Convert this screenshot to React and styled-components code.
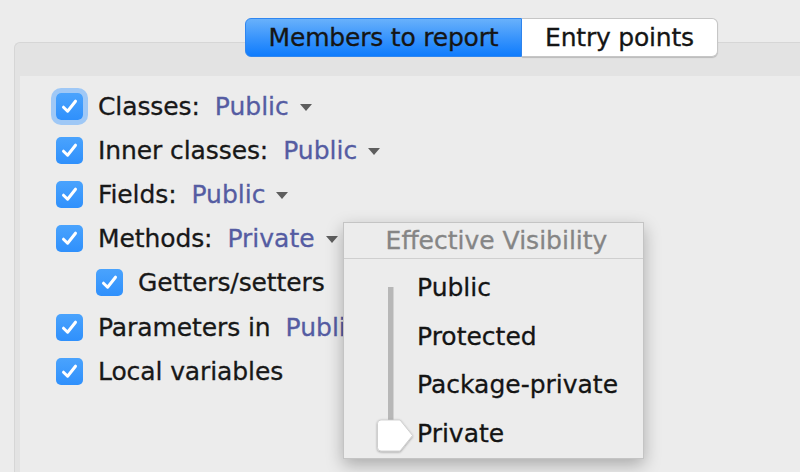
import React from "react";
import styled, { createGlobalStyle } from "styled-components";

const Global = createGlobalStyle`
  html, body { margin: 0; padding: 0; background: #ececec; }
  body {
    font-family: "DejaVu Sans", "Liberation Sans", sans-serif;
    -webkit-text-stroke: 0.3px currentColor;
  }
`;

const Screen = styled.div`
  width: 800px;
  height: 472px;
  overflow: hidden;
  background: #ececec;
  position: relative;
  padding-top: 42px;
  box-sizing: border-box;
`;

const Panel = styled.div`
  margin-left: 14px;
  width: 800px;
  height: 440px;
  box-sizing: border-box;
  border: 1px solid #d6d6d6;
  border-right: none;
  border-bottom: none;
  border-radius: 6px 0 0 0;
  background: #e3e3e3;
  display: flex;
  flex-direction: column;
`;

const Tabs = styled.div`
  display: flex;
  margin: -25px 0 0 230px;
  height: 39px;
  width: 473px;
`;

const Tab = styled.div`
  box-sizing: border-box;
  width: ${(p) => p.$w}px;
  display: flex;
  align-items: center;
  justify-content: center;
  font-size: 25px;
  color: #151515;
  letter-spacing: -0.2px;
  ${(p) =>
    p.$active
      ? `
    background: linear-gradient(#68b1fb, #3a95fc 50%, #0f7cfd);
    border: 1px solid #2f86f0;
    border-radius: 6px 0 0 6px;
  `
      : `
    background: #ffffff;
    border: 1px solid #c6c6c6;
    border-left: none;
    border-radius: 0 6px 6px 0;
    box-shadow: 0 1px 1px rgba(0,0,0,0.18);
  `}
`;

const Content = styled.div`
  margin: 19px 0 0 5px;
  flex: 1;
  background: #ececec;
  padding: 8px 0 0 36px;
  position: relative;
`;

const Row = styled.div`
  height: 44.2px;
  display: flex;
  align-items: center;
  padding-left: ${(p) => (p.$indent ? 40 : 0)}px;
  font-size: 25px;
  color: #181818;
  white-space: nowrap;
`;

const Box = styled.span`
  width: 27px;
  height: 27px;
  flex: none;
  border-radius: 5px;
  background: linear-gradient(#4aa3fd, #2f90fc);
  display: flex;
  align-items: center;
  justify-content: center;
  margin-right: 15px;
  box-shadow: ${(p) => (p.$focus ? "0 0 0 5px #9fc8f6" : "none")};
`;

const Label = styled.span`
  letter-spacing: -0.1px;
`;

const Value = styled.span`
  color: #555ca2;
  margin-left: 15px;
`;

const Caret = styled.span`
  width: 0;
  height: 0;
  border-left: 6.5px solid transparent;
  border-right: 6.5px solid transparent;
  border-top: 7px solid #5e5e5e;
  margin-left: 11px;
  margin-top: 2px;
`;

const Popup = styled.div`
  position: absolute;
  left: 323px;
  top: 146px;
  width: 301px;
  height: 237px;
  box-sizing: border-box;
  background: #ececec;
  border: 1px solid #c4c4c4;
  box-shadow: 0 6px 16px rgba(0, 0, 0, 0.28);
  display: flex;
  flex-direction: column;
`;

const PopupHeader = styled.div`
  height: 35px;
  border-bottom: 1px solid #cfcfcf;
  display: flex;
  align-items: center;
  justify-content: center;
  font-size: 25px;
  color: #858585;
  flex: none;
  padding-left: 6px;
`;

const PopupBody = styled.div`
  display: flex;
  padding-top: 4px;
`;

const SliderCol = styled.div`
  width: 73px;
  flex: none;
`;

const Items = styled.div`
  display: flex;
  flex-direction: column;
`;

const Item = styled.div`
  height: 48.7px;
  display: flex;
  align-items: center;
  font-size: 25px;
  color: #141414;
`;

const Check = () => (
  <svg width="17" height="15" viewBox="0 0 17 15">
    <path
      d="M2.5 8.2 L6.6 12.2 L14.5 2.2"
      fill="none"
      stroke="#fff"
      strokeWidth="3"
      strokeLinecap="round"
      strokeLinejoin="round"
    />
  </svg>
);

const Slider = () => (
  <svg width="73" height="195" viewBox="0 0 73 195">
    <defs>
      <filter id="sh" x="-30%" y="-30%" width="160%" height="160%">
        <feDropShadow dx="0" dy="0.8" stdDeviation="0.8" floodColor="#000" floodOpacity="0.35" />
      </filter>
    </defs>
    <rect x="44" y="24" width="5.5" height="133" fill="#b7b7b7" />
    <path
      d="M37 157 Q33.5 157 33.5 160.5 L33.5 184.5 Q33.5 188 37 188 L56 188 L68.5 172.5 L56 157 Z"
      fill="#ffffff"
      stroke="#c9c9c9"
      strokeWidth="0.8"
      filter="url(#sh)"
    />
  </svg>
);

const rows = [
  { label: "Classes:", value: "Public", caret: true, focus: true },
  { label: "Inner classes:", value: "Public", caret: true },
  { label: "Fields:", value: "Public", caret: true },
  { label: "Methods:", value: "Private", caret: true },
  { label: "Getters/setters", indent: true },
  { label: "Parameters in", value: "Public", caret: true },
  { label: "Local variables" },
];

export default function App() {
  return (
    <>
      <Global />
      <Screen>
        <Panel>
          <Tabs>
            <Tab $active $w={277}>Members to report</Tab>
            <Tab $w={196}>Entry points</Tab>
          </Tabs>
          <Content>
            {rows.map((r) => (
              <Row key={r.label} $indent={r.indent}>
                <Box $focus={r.focus}>
                  <Check />
                </Box>
                <Label>{r.label}</Label>
                {r.value && <Value>{r.value}</Value>}
                {r.caret && <Caret />}
              </Row>
            ))}
            <Popup>
              <PopupHeader>Effective Visibility</PopupHeader>
              <PopupBody>
                <SliderCol>
                  <Slider />
                </SliderCol>
                <Items>
                  <Item>Public</Item>
                  <Item>Protected</Item>
                  <Item>Package-private</Item>
                  <Item>Private</Item>
                </Items>
              </PopupBody>
            </Popup>
          </Content>
        </Panel>
      </Screen>
    </>
  );
}
